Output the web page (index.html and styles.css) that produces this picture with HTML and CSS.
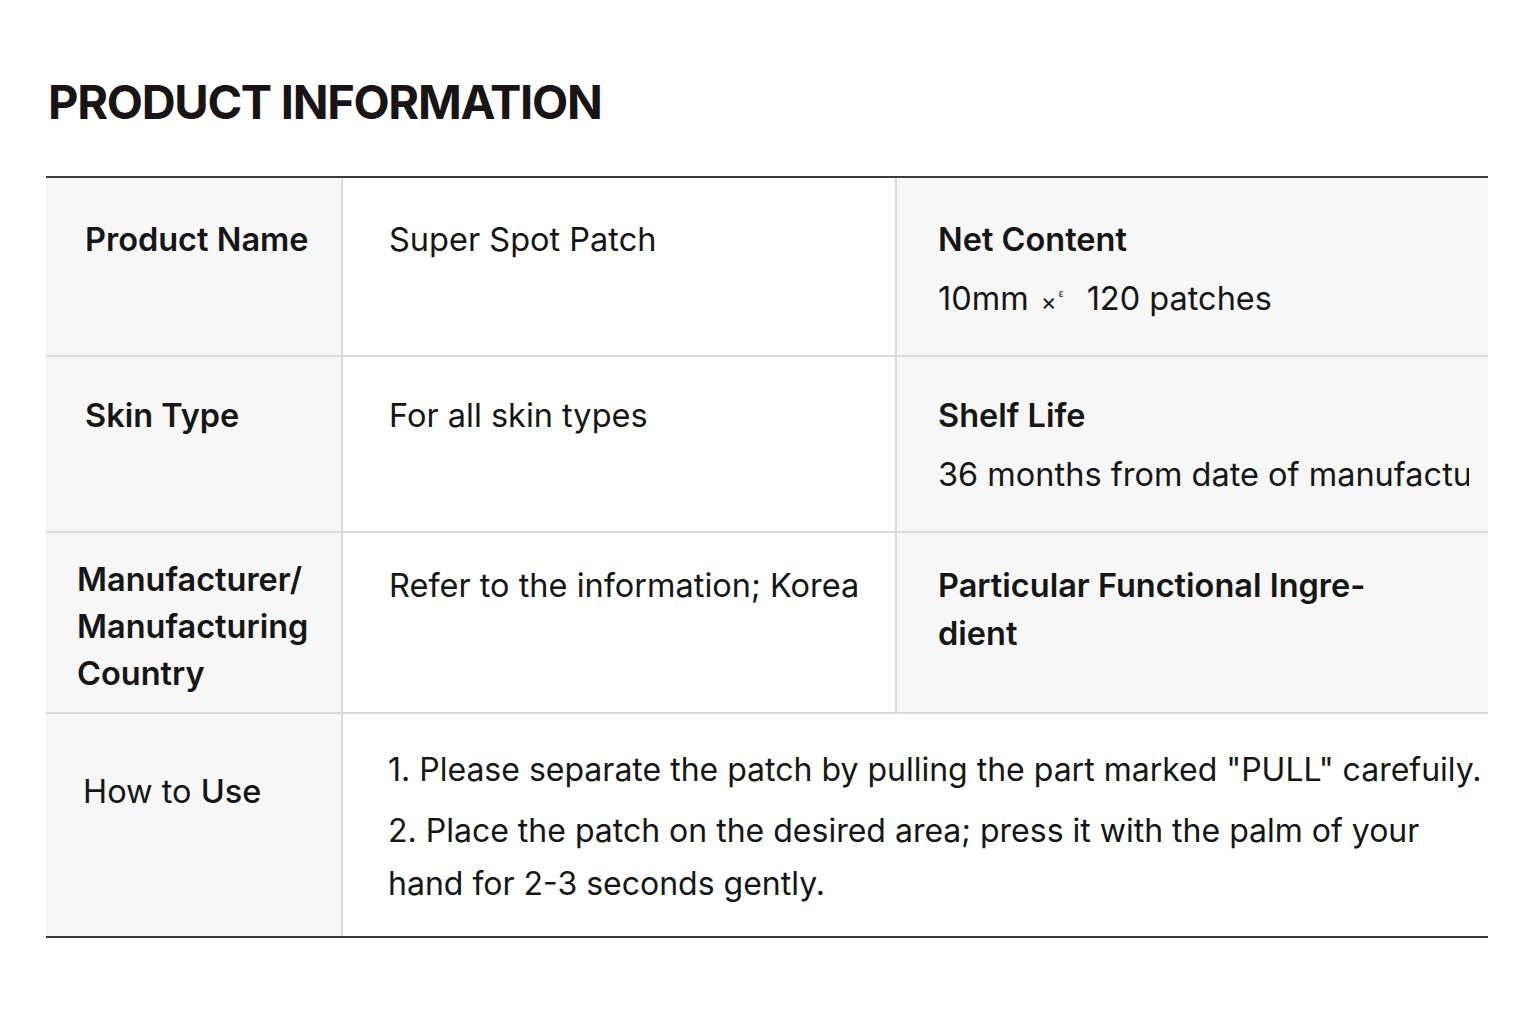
FILE: index.html
```html
<!DOCTYPE html>
<html lang="en">
<head>
<meta charset="utf-8">
<title>Product Information</title>
<link rel="stylesheet" href="styles.css">
</head>
<body>
<main class="page">
  <h1 class="title">PRODUCT INFORMATION</h1>
  <div class="table">
    <div class="cell label r1"><span class="strong">Product Name</span></div>
    <div class="cell value r1">Super Spot Patch</div>
    <div class="cell side r1">
      <div class="side-title">Net Content</div>
      <div class="side-value">10mm <span class="times">×<sup>ᵋ</sup></span> 120 patches</div>
    </div>

    <div class="cell label r2"><span class="strong">Skin Type</span></div>
    <div class="cell value r2">For all skin types</div>
    <div class="cell side r2">
      <div class="side-title">Shelf Life</div>
      <div class="side-value clip">36 months from date of manufacture</div>
    </div>

    <div class="cell label r3 tight"><span class="strong">Manufacturer/<br>Manufacturing<br>Country</span></div>
    <div class="cell value r3">Refer to the information; Korea</div>
    <div class="cell side r3">
      <div class="side-title multi">Particular Functional Ingre-<br>dient</div>
    </div>

    <div class="cell label r4 use">How to <span class="semi">Use</span></div>
    <div class="cell value r4 wide">
      <p class="step first">1. Please separate the patch by pulling the part marked "PULL" carefuily.</p>
      <p class="step">2. Place the patch on the desired area; press it with the palm of your hand for 2-3 seconds gently.</p>
    </div>
  </div>
</main>
</body>
</html>
```

FILE: styles.css
```css
* { box-sizing: border-box; }
html, body { margin: 0; padding: 0; background: #ffffff; }
body {
  font-family: Inter, "Liberation Sans", sans-serif;
  color: #161616;
}
.page {
  padding: 71px 48px 0 46px;
}
.title {
  margin: 0 0 43px 2px;
  font-family: Inter, "Liberation Sans", sans-serif;
  font-weight: 700;
  font-size: 47px;
  line-height: 62px;
  letter-spacing: -1.3px;
  color: #1a1416;
}
.table {
  width: 1442px;
  display: grid;
  grid-template-columns: 297px 554px 591px;
  grid-template-rows: 179px 176px 181px 222px;
  border-top: 2px solid #3c3c3c;
  border-bottom: 2px solid #3c3c3c;
}
.cell {
  border-bottom: 2px solid #dadada;
  border-right: 2px solid #dcdcdc;
  font-size: 32.5px;
  line-height: 40px;
  overflow: hidden;
}
.r4 { border-bottom: none; }
.label {
  background: #f7f7f7;
  padding: 42px 0 0 39px;
}
.r2.label, .r2.value, .r2.side { padding-top: 39px; }
.label.tight { padding: 23px 0 0 31px; line-height: 47px; }
.label.use { padding: 58px 0 0 37px; }
.strong { font-weight: 600; }
.semi { font-weight: 500; }
.value {
  background: #ffffff;
  padding: 42px 0 0 46px;
}
.value.r3 { padding-top: 33px; }
.side {
  background: #f7f7f7;
  border-right: none;
  padding: 42px 0 0 41px;
}
.side-title { font-weight: 600; }
.side.r3 { padding-top: 29px; }
.side-title.multi { line-height: 48px; }
.side-value { margin-top: 19px; white-space: nowrap; }
.r1 .side-value { margin-top: 15px; }
.side-value.clip { width: 531px; overflow: hidden; }
.times { font-size: 24px; margin: 0 14px 0 3px; }
.times sup { font-size: 15px; vertical-align: 10px; margin-left: 2px; }
.wide {
  grid-column: 2 / 4;
  border-right: none;
  padding: 36px 0 0 45px;
}
.step { margin: 0; font-size: 32px; }
.step.first { white-space: nowrap; }
.step + .step { margin-top: 14px; line-height: 53px; }
```
